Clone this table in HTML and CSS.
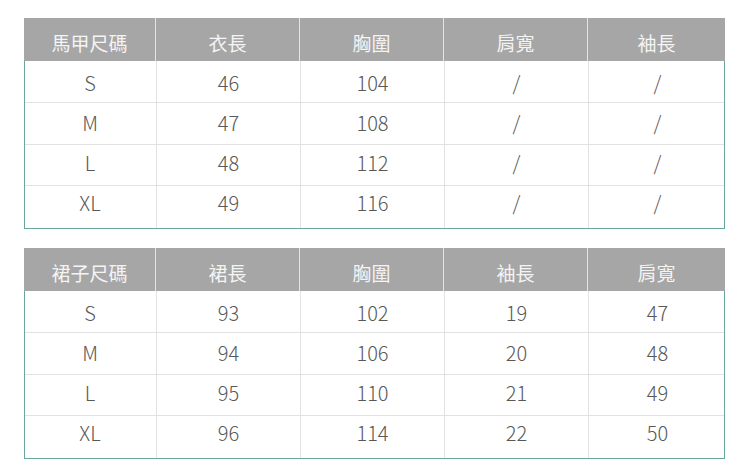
FILE: index.html
```html
<!DOCTYPE html>
<html lang="zh-Hant">
<head>
<meta charset="utf-8">
<link rel="stylesheet" href="styles.css">
</head>
<body>
<div class="page">
  <div class="sheet">
    <div class="row head">
      <div class="cell">馬甲尺碼</div><div class="cell">衣長</div><div class="cell">胸圍</div><div class="cell">肩寬</div><div class="cell">袖長</div>
    </div>
    <div class="body">
      <div class="row"><div class="cell">S</div><div class="cell">46</div><div class="cell">104</div><div class="cell">/</div><div class="cell">/</div></div>
      <div class="row"><div class="cell">M</div><div class="cell">47</div><div class="cell">108</div><div class="cell">/</div><div class="cell">/</div></div>
      <div class="row"><div class="cell">L</div><div class="cell">48</div><div class="cell">112</div><div class="cell">/</div><div class="cell">/</div></div>
      <div class="row"><div class="cell">XL</div><div class="cell">49</div><div class="cell">116</div><div class="cell">/</div><div class="cell">/</div></div>
    </div>
  </div>
  <div class="sheet">
    <div class="row head">
      <div class="cell">裙子尺碼</div><div class="cell">裙長</div><div class="cell">胸圍</div><div class="cell">袖長</div><div class="cell">肩寬</div>
    </div>
    <div class="body">
      <div class="row"><div class="cell">S</div><div class="cell">93</div><div class="cell">102</div><div class="cell">19</div><div class="cell">47</div></div>
      <div class="row"><div class="cell">M</div><div class="cell">94</div><div class="cell">106</div><div class="cell">20</div><div class="cell">48</div></div>
      <div class="row"><div class="cell">L</div><div class="cell">95</div><div class="cell">110</div><div class="cell">21</div><div class="cell">49</div></div>
      <div class="row"><div class="cell">XL</div><div class="cell">96</div><div class="cell">114</div><div class="cell">22</div><div class="cell">50</div></div>
    </div>
  </div>
</div>
</body>
</html>
```
FILE: styles.css
```css
html, body {
  margin: 0;
  padding: 0;
  background: #ffffff;
}
.page {
  padding: 18px 0 0 24px;
  display: flex;
  flex-direction: column;
  gap: 19px;
  font-family: "Noto Sans CJK TC", "Noto Sans", sans-serif;
  font-weight: 300;
  font-size: 19px;
}
.sheet {
  width: 701px;
}
.row {
  display: grid;
  grid-template-columns: 131px 144px 144px 144px 138px;
}
.cell {
  display: flex;
  align-items: center;
  justify-content: center;
  box-sizing: border-box;
}
.head {
  height: 43px;
  background: #a6a6a6;
  color: #f4f4f4;
  font-weight: 400;
}
.head .cell {
  padding-top: 6px;
}
.head .cell + .cell {
  border-left: 1px solid #e4e4e4;
}
.body {
  border: 1px solid #68a69e;
  border-top: none;
}
.body .row {
  box-sizing: border-box;
  color: #585858;
  font-size: 20px;
  line-height: 20px;
}
.body .cell {
  align-items: flex-start;
}
.body .row:nth-child(1) { height: 41px; }
.body .row:nth-child(2) { height: 42px; }
.body .row:nth-child(3) { height: 41px; }
.body .row:nth-child(4) { height: 43px; }
.body .row:nth-child(1) .cell { padding-top: 12px; }
.body .row:nth-child(2) .cell { padding-top: 10px; }
.body .row:nth-child(3) .cell { padding-top: 8px; }
.body .row:nth-child(4) .cell { padding-top: 7px; }
.body .row + .row {
  border-top: 1px solid #e2e2e2;
}
.body .cell + .cell {
  border-left: 1px solid #e2e2e2;
}
.body .row .cell:first-child {
  margin-left: -1px;
}
```
